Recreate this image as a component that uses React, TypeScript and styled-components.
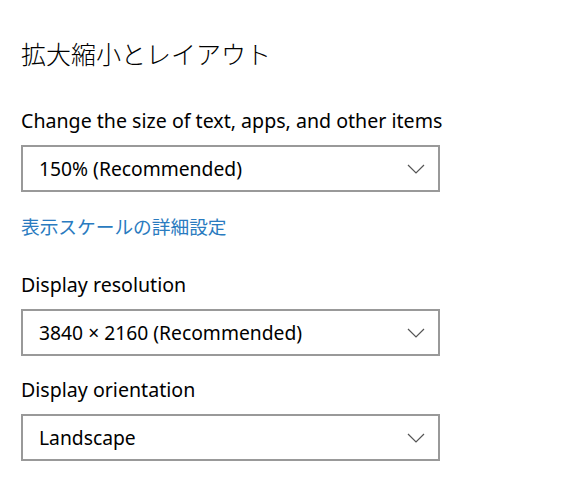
import styled, { createGlobalStyle } from "styled-components";

const GlobalStyle = createGlobalStyle`
  body {
    margin: 0;
    background: #ffffff;
    font-family: "Noto Sans", "Noto Sans CJK JP", sans-serif;
    color: #000000;
  }
`;

const Page = styled.div`
  width: 576px;
  height: 501px;
  padding: 34px 0 0 21px;
  box-sizing: border-box;
  display: flex;
  flex-direction: column;
`;

const Heading = styled.h1`
  margin: 0 0 36px;
  font-family: "Noto Sans CJK JP", sans-serif;
  font-weight: 300;
  font-size: 25px;
  line-height: 38px;
`;

const Label = styled.div`
  font-size: 19.6px;
  line-height: 26px;
  margin-bottom: 11px;
`;

const Select = styled.div<{ gap: number }>`
  width: 419px;
  height: 47px;
  box-sizing: border-box;
  border: 2px solid #999999;
  display: flex;
  align-items: center;
  justify-content: space-between;
  padding: 0 13px 0 16px;
  font-size: 19.3px;
  margin-bottom: ${(p) => p.gap}px;
`;

const Link = styled.a`
  font-family: "Noto Sans CJK JP", sans-serif;
  font-size: 18.7px;
  line-height: 26px;
  color: #2a7bc0;
  text-decoration: none;
  margin-bottom: 33px;
`;

const Chevron = () => (
  <svg width="18" height="10" viewBox="0 0 18 10">
    <path d="M1 1 L9 9 L17 1" fill="none" stroke="#555" strokeWidth="1.2" />
  </svg>
);

export default function App() {
  return (
    <>
      <GlobalStyle />
      <Page>
        <Heading>拡大縮小とレイアウト</Heading>
        <Label>Change the size of text, apps, and other items</Label>
        <Select gap={21}>
          <span>150% (Recommended)</span>
          <Chevron />
        </Select>
        <Link>表示スケールの詳細設定</Link>
        <Label>Display resolution</Label>
        <Select gap={21}>
          <span>3840 × 2160 (Recommended)</span>
          <Chevron />
        </Select>
        <Label>Display orientation</Label>
        <Select gap={0}>
          <span>Landscape</span>
          <Chevron />
        </Select>
      </Page>
    </>
  );
}
